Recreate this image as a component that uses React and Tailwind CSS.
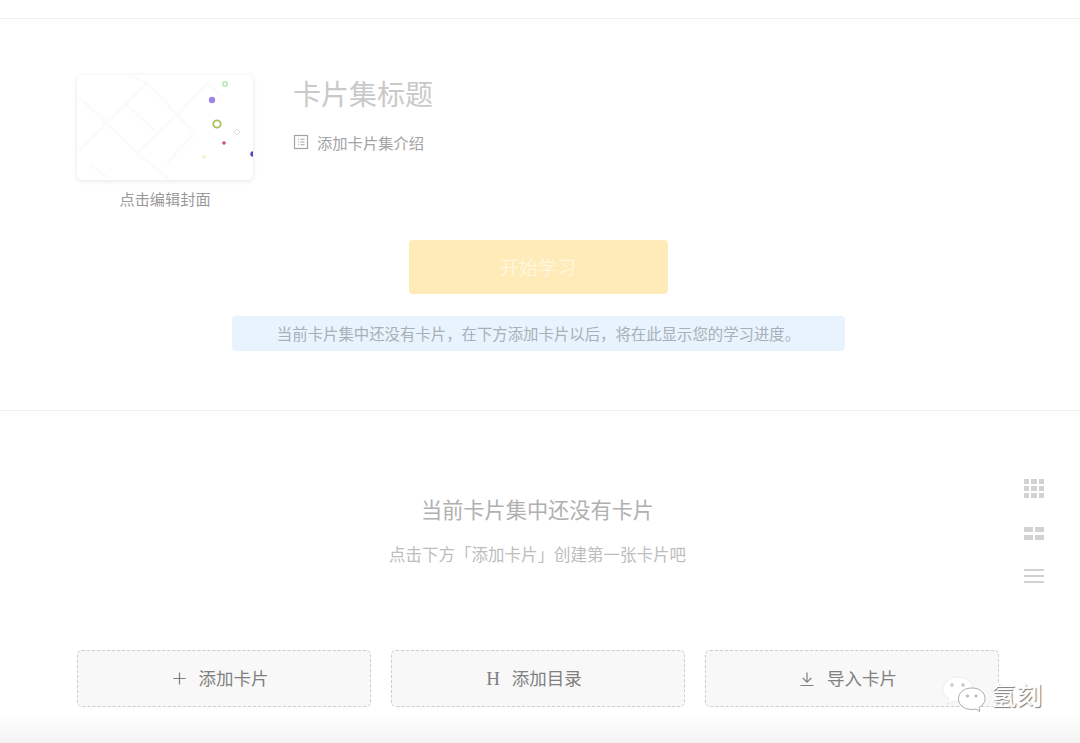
import React from "react";

const CJK = "font-['Noto_Sans_CJK_SC','Noto_Sans',sans-serif]";

function Cover() {
  return (
    <svg width="176" height="105" viewBox="0 0 176 105" className="block">
      <g stroke="#fbfbfb" strokeWidth="3" fill="none">
        <path d="M2 22 L30 48 L70 8 L100 40 L60 78 L30 48 L2 76" />
        <path d="M60 78 L92 104 M100 40 L130 8 L145 22 M100 40 L118 58 L90 88" />
        <path d="M14 90 L30 102 M70 8 L52 0 M10 30 L40 58 M50 30 L80 58" />
      </g>
      <circle cx="148" cy="9" r="2.2" fill="none" stroke="#a5e8a8" strokeWidth="1.3" />
      <circle cx="135" cy="25" r="3.2" fill="#9b86e6" />
      <circle cx="140" cy="49" r="3.7" fill="none" stroke="#a9c25c" strokeWidth="1.8" />
      <path d="M160 54 L163 57 L160 60 L157 57 Z" fill="none" stroke="#dcdcdc" strokeWidth="1" />
      <circle cx="147" cy="68" r="1.8" fill="#d0517f" />
      <circle cx="127" cy="82" r="2" fill="#f5f2cf" />
      <circle cx="176" cy="79" r="2.7" fill="#5247b8" />
    </svg>
  );
}

function Button({ icon, label }) {
  return (
    <div className="flex h-[57px] flex-1 items-center justify-center gap-[12px] rounded-[5px] border border-dashed border-[#cdcdcd] bg-[#f8f8f8] pr-[8px] text-[17.5px] text-[#808080]">
      {icon}
      <span>{label}</span>
    </div>
  );
}

export default function App() {
  return (
    <div className={`relative flex h-[743px] w-[1080px] flex-col overflow-hidden bg-white ${CJK}`}>
      <div className="h-[19px] shrink-0 border-b border-[#f0f0f0]" />

      <section className="flex h-[392px] shrink-0 flex-col border-b border-[#eeeeee]">
        <div className="flex gap-[40px] pl-[77px] pt-[56px]">
          <div className="flex w-[176px] flex-col items-center">
            <div className="h-[105px] w-[176px] overflow-hidden rounded-[5px] bg-white shadow-[0_1px_5px_rgba(0,0,0,0.1)]">
              <Cover />
            </div>
            <div className="mt-[8px] text-[15.2px] leading-[20px] text-[#999999]">点击编辑封面</div>
          </div>
          <div className="flex flex-col">
            <div className="-mt-px text-[28px] leading-[38px] text-[#c9c9c9]">卡片集标题</div>
            <div className="mt-[20px] flex items-center gap-[8px] text-[15.3px] leading-[20px] text-[#a3a3a3]">
              <svg width="16" height="16" viewBox="0 0 16 16" fill="none" stroke="#a3a3a3">
                <rect x="1.5" y="1.5" width="13" height="13" strokeWidth="1.2" />
                <path d="M5 5.2h1M7.500 5.200h4M5 8h1M7.500 8h4M5 10.800h1M7.500 10.800h4" strokeWidth="1" />
              </svg>
              <span>添加卡片集介绍</span>
            </div>
          </div>
        </div>
        <div className="mt-[32px] flex flex-col items-center">
          <div className="ml-[-4px] flex h-[54px] w-[259px] items-center justify-center rounded-[4px] bg-[#feebb8] text-[19px] text-[#fff6dd]">
            开始学习
          </div>
          <div className="ml-[-3px] mt-[22px] flex h-[35px] w-[613px] items-center justify-center rounded-[4px] bg-[#e8f3fd] text-[15.4px] text-[#a6b0b8]">
            当前卡片集中还没有卡片，在下方添加卡片以后，将在此显示您的学习进度。
          </div>
        </div>
      </section>

      <section className="flex flex-1 flex-col items-center">
        <div className="ml-[-5px] mt-[82px] text-[21.2px] leading-[32px] text-[#b0b0b0]">当前卡片集中还没有卡片</div>
        <div className="ml-[-5px] mt-[17px] text-[16.5px] leading-[24px] text-[#bdbdbd]">点击下方「添加卡片」创建第一张卡片吧</div>
        <div className="ml-[77px] mt-[84px] flex w-[922px] gap-[20px] self-start">
          <Button
            label="添加卡片"
            icon={
              <svg width="15" height="15" viewBox="0 0 16 16" stroke="#808080" strokeWidth="1.3">
                <path d="M8 1.500v13M1.500 8h13" />
              </svg>
            }
          />
          <Button
            label="添加目录"
            icon={<span className="font-['Liberation_Serif',serif] text-[19px] leading-none">H</span>}
          />
          <Button
            label="导入卡片"
            icon={
              <svg width="16" height="16" viewBox="0 0 16 16" fill="none" stroke="#808080" strokeWidth="1.2">
                <path d="M8 1.500v9.500M3.800 7l4.200 4.200L12.200 7M1.500 14.500h13" />
              </svg>
            }
          />
        </div>
      </section>

      <div className="pointer-events-none absolute bottom-0 left-0 right-0 h-[28px] bg-gradient-to-b from-white to-[#f3f3f3]" />

      <div className="absolute left-[1024px] top-[479px] flex flex-col">
        <div className="grid w-[20px] grid-cols-3 gap-[2px]">
          {Array.from({ length: 9 }).map((_, i) => (
            <div key={i} className="h-[5px] bg-[#d2d2d2]" />
          ))}
        </div>
        <div className="mt-[29px] grid w-[20px] grid-cols-2 gap-x-[1.5px] gap-y-[3px]">
          {Array.from({ length: 4 }).map((_, i) => (
            <div key={i} className="h-[5px] bg-[#d2d2d2]" />
          ))}
        </div>
        <div className="mt-[29px] flex w-[20px] flex-col gap-[4px]">
          {Array.from({ length: 3 }).map((_, i) => (
            <div key={i} className="h-[2px] bg-[#d2d2d2]" />
          ))}
        </div>
      </div>

      <div className="absolute left-[940px] top-[674px] flex items-center gap-[3px]">
        <svg width="48" height="40" viewBox="0 0 48 40">
          <path d="M18 3C9.500 3 3 8.500 3 15c0 4 2.200 7.500 5.800 9.800L7.500 30l6-3c1.500.4 3 .6 4.500.6 8.500 0 15-5.600 15-12.600C33 8.500 26.500 3 18 3z" fill="#ffffff" stroke="#e2e2e2" strokeWidth="0.6" />
          <circle cx="12" cy="11" r="1.300" fill="none" stroke="#999" strokeWidth="0.7" />
          <circle cx="23" cy="11" r="1.300" fill="none" stroke="#999" strokeWidth="0.7" />
          <path d="M32 14C24 14 18.500 18.500 18.500 25c0 6 5.500 10.500 13.500 10.500 1.300 0 2.700-.2 3.900-.5l4 2.400-.9-3.900c3-1.900 6-4.800 6-8.500C45 18.500 40 14 32 14z" fill="#ffffff" stroke="#8a8a8a" strokeWidth="0.7" />
          <circle cx="27.500" cy="22" r="1" fill="none" stroke="#777" strokeWidth="0.7" />
          <circle cx="36" cy="22" r="1" fill="none" stroke="#777" strokeWidth="0.7" />
        </svg>
        <span className="text-[25.5px] leading-[30px] text-white [text-shadow:1px_1px_1px_#777777]">氢刻</span>
      </div>
    </div>
  );
}
